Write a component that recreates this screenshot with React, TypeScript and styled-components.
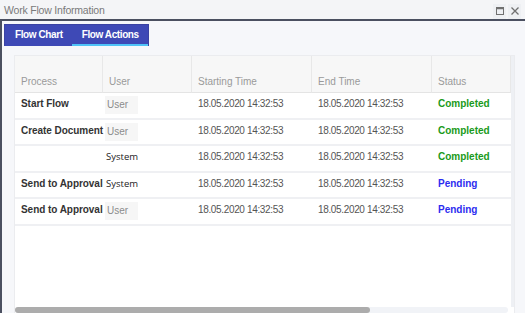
import React from 'react';
import styled, { createGlobalStyle } from 'styled-components';

const GlobalStyle = createGlobalStyle`
	html, body {
		margin: 0;
		padding: 0;
		background: #f6f7fa;
		font-family: 'Liberation Sans', Arial, sans-serif;
	}
`;

const Window = styled.div`
	width: 525px;
	height: 313px;
	display: flex;
	flex-direction: column;
	overflow: hidden;
	background: #f6f7fa;
`;

const TitleBar = styled.div`
	height: 19px;
	display: flex;
	align-items: center;
	justify-content: space-between;
	padding: 0 4px 0 4px;
	background: #f4f5f7;
	border-bottom: 2px solid #4b5060;
	color: #7a7a7a;
	font-size: 10.5px;
	letter-spacing: -0.2px;
`;

const TitleTools = styled.div`
	display: flex;
	align-items: center;
	gap: 2px;
	padding-top: 3px;
`;

const ToolButton = styled.span`
	width: 13px;
	height: 15px;
	display: flex;
	align-items: center;
	justify-content: center;
	background: #eef0f3;
`;

const Body = styled.div`
	flex: 1;
	display: flex;
	flex-direction: column;
	border-left: 2px solid #4b5060;
	padding: 3px 0 0 2px;
	min-height: 0;
`;

const TabBar = styled.div`
	display: flex;
	align-self: flex-start;
	height: 22px;
	background: #3e49b6;
	border: 1px solid #3a42a3;
	border-bottom: none;
	box-sizing: border-box;
`;

const Tab = styled.div<{ $active?: boolean }>`
	display: flex;
	align-items: center;
	padding: 0 9px 0 10px;
	color: #ffffff;
	font-size: 10px;
	letter-spacing: -0.4px;
	font-weight: bold;
	box-sizing: border-box;
	border-bottom: 2px solid ${(p) => (p.$active ? '#4fc3f7' : 'transparent')};
`;

const Panel = styled.div`
	flex: 1;
	margin: 9px 10px 0 10px;
	display: flex;
	flex-direction: column;
	background: #ffffff;
	border: 1px solid #ebecef;
	border-bottom: none;
	min-height: 0;
`;

const PanelInner = styled.div`
	flex: 1;
	display: flex;
	min-height: 0;
`;

const TableArea = styled.div`
	flex: 1;
	display: flex;
	flex-direction: column;
`;

const VScroll = styled.div`
	width: 4px;
	background: #eef0f4;
`;

const Grid = styled.div`
	display: grid;
	grid-template-columns: 88px 89px 120px 120px 79px;
`;

const HeadCell = styled.div`
	height: 37px;
	display: flex;
	align-items: flex-end;
	padding: 0 0 5px 6px;
	box-sizing: border-box;
	background: #f7f7f7;
	border-right: 1px solid #e8e8e8;
	border-bottom: 1px solid #e4e4e4;
	color: #9a9a9a;
	font-size: 10px;
`;

const Cell = styled.div<{ $pad?: number }>`
	height: 26.6px;
	padding: 3px 0 0 ${(p) => p.$pad ?? 6}px;
	box-sizing: border-box;
	border-bottom: 2px solid #eff0f3;
	font-size: 10px;
	line-height: 16px;
	white-space: nowrap;
`;

const ProcessText = styled.span`
	color: #333333;
	font-weight: bold;
	font-size: 10px;
	letter-spacing: -0.05px;
`;

const UserTag = styled.span`
	display: inline-block;
	width: 33px;
	height: 18px;
	line-height: 18px;
	padding-left: 2px;
	box-sizing: border-box;
	background: #f6f6f6;
	color: #8c8c8c;
	font-size: 10px;
`;

const SystemText = styled.span`
	color: #222222;
	font-family: 'Open Sans', 'DejaVu Sans', sans-serif;
	font-size: 9.5px;
	padding-left: 1px;
`;

const DateText = styled.span`
	color: #555555;
	font-size: 10px;
	letter-spacing: -0.35px;
`;

const StatusText = styled.span<{ $done: boolean }>`
	font-weight: bold;
	font-size: 10px;
	color: ${(p) => (p.$done ? '#1a9a1a' : '#2c2cf0')};
`;

const HScroll = styled.div`
	height: 6px;
	margin-right: 6px;
	background: #f1f3f7;
	border-radius: 3px;
	display: flex;
`;

const HThumb = styled.div`
	width: 355px;
	background: #acacac;
	border-radius: 3px;
`;

type Row = { process: string; user: 'User' | 'System'; start: string; end: string; status: 'Completed' | 'Pending' };

const rows: Row[] = [
	{ process: 'Start Flow', user: 'User', start: '18.05.2020 14:32:53', end: '18.05.2020 14:32:53', status: 'Completed' },
	{ process: 'Create Document', user: 'User', start: '18.05.2020 14:32:53', end: '18.05.2020 14:32:53', status: 'Completed' },
	{ process: '', user: 'System', start: '18.05.2020 14:32:53', end: '18.05.2020 14:32:53', status: 'Completed' },
	{ process: 'Send to Approval', user: 'System', start: '18.05.2020 14:32:53', end: '18.05.2020 14:32:53', status: 'Pending' },
	{ process: 'Send to Approval', user: 'User', start: '18.05.2020 14:32:53', end: '18.05.2020 14:32:53', status: 'Pending' },
];

const App = () => {
	return (
		<React.Fragment>
			<GlobalStyle />
			<Window>
				<TitleBar>
					<span>Work Flow Information</span>
					<TitleTools>
						<ToolButton>
							<svg width="8" height="8" viewBox="0 0 8 8">
								<rect x="0.5" y="0.5" width="7" height="7" fill="none" stroke="#707070" strokeWidth="1" />
								<line x1="0" y1="1.5" x2="8" y2="1.5" stroke="#707070" strokeWidth="1.5" />
							</svg>
						</ToolButton>
						<ToolButton>
							<svg width="8" height="8" viewBox="0 0 8 8">
								<path d="M0.5 0.5 L7.5 7.5 M7.5 0.5 L0.5 7.5" stroke="#707070" strokeWidth="1.3" />
							</svg>
						</ToolButton>
					</TitleTools>
				</TitleBar>
				<Body>
					<TabBar>
						<Tab>Flow Chart</Tab>
						<Tab $active>Flow Actions</Tab>
					</TabBar>
					<Panel>
						<PanelInner>
							<TableArea>
								<Grid>
									<HeadCell>Process</HeadCell>
									<HeadCell>User</HeadCell>
									<HeadCell>Starting Time</HeadCell>
									<HeadCell>End Time</HeadCell>
									<HeadCell>Status</HeadCell>
									{rows.map((r, i) => (
										<React.Fragment key={i}>
											<Cell>
												<ProcessText>{r.process}</ProcessText>
											</Cell>
											<Cell $pad={2}>
												{r.user === 'User' ? <UserTag>User</UserTag> : <SystemText>System</SystemText>}
											</Cell>
											<Cell>
												<DateText>{r.start}</DateText>
											</Cell>
											<Cell>
												<DateText>{r.end}</DateText>
											</Cell>
											<Cell>
												<StatusText $done={r.status === 'Completed'}>{r.status}</StatusText>
											</Cell>
										</React.Fragment>
									))}
								</Grid>
							</TableArea>
							<VScroll />
						</PanelInner>
						<HScroll>
							<HThumb />
						</HScroll>
					</Panel>
				</Body>
			</Window>
		</React.Fragment>
	);
};

export default App;
